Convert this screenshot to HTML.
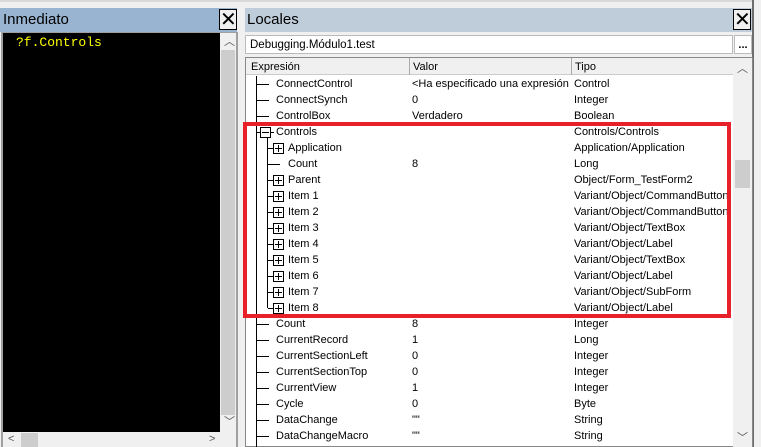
<!DOCTYPE html>
<html><head><meta charset="utf-8"><style>
*{margin:0;padding:0;box-sizing:border-box}
body{width:761px;height:447px;overflow:hidden;background:#f0f0f0;font-family:"Liberation Sans",Arial,sans-serif;font-size:11px;color:#000;position:relative}
.a{position:absolute}
.t{white-space:nowrap;line-height:16px}
.close{border:1px solid #000;background:#f0f0f0;font-size:20px;line-height:18px;text-align:center;font-family:"DejaVu Sans",sans-serif}
.hl{position:absolute;height:1px;background:#000}
.vl{position:absolute;width:1px;background:#000}
.box{position:absolute;width:11px;height:11px;border:1px solid #000;background:#fff}
.box:before{content:"";position:absolute;left:1px;top:4px;width:7px;height:1px;background:#000}
.plus:after{content:"";position:absolute;left:4px;top:1px;width:1px;height:7px;background:#000}
</style></head><body>
<div class="a" style="left:0;top:0;width:761px;height:2px;background:#d8d8d8"></div>
<div class="a" style="left:0;top:8px;width:237px;height:24px;background:#99b4d1"></div>
<div class="a t" style="left:3px;top:9px;font-size:15px;line-height:21px;color:#000">Inmediato</div>
<div class="a close" style="left:219px;top:9px;width:18px;height:21px">✕</div>
<div class="a" style="left:1px;top:32px;width:237px;height:415px;background:#a0a0a0"></div>
<div class="a" style="left:3px;top:33px;width:217px;height:399px;background:#000"></div>
<div class="a t" style="left:16px;top:35px;color:#ffff00;font-family:'Liberation Mono',monospace;font-size:13px">?f.Controls</div>
<div class="a" style="left:220px;top:33px;width:16px;height:399px;background:#f0f0f0"></div>
<div class="a" style="left:221px;top:50px;width:14px;height:365px;background:#cdcdcd"></div>
<div class="a t" style="left:224px;top:34px;font-size:11px;color:#555">︿</div>
<div class="a t" style="left:224px;top:414px;font-size:11px;color:#555">﹀</div>
<div class="a" style="left:3px;top:432px;width:233px;height:15px;background:#f0f0f0"></div>
<div class="a" style="left:21px;top:433px;width:17px;height:14px;background:#cdcdcd"></div>
<div class="a t" style="left:8px;top:431px;color:#555">&lt;</div>
<div class="a t" style="left:209px;top:431px;color:#555">&gt;</div>
<div class="a" style="left:245px;top:8px;width:507px;height:24px;background:#bfcddb"></div>
<div class="a t" style="left:247px;top:9px;font-size:15px;line-height:21px">Locales</div>
<div class="a close" style="left:733px;top:9px;width:18px;height:21px">✕</div>
<div class="a" style="left:752px;top:0;width:9px;height:447px;background:#f0f0f0;border-left:2px solid #6d6d6d"></div>
<div class="a" style="left:245px;top:35px;width:488px;height:19px;background:#fff;border:1px solid #bbb"></div>
<div class="a t" style="left:250px;top:37px;font-size:11.5px">Debugging.Módulo1.test</div>
<div class="a" style="left:734px;top:35px;width:18px;height:19px;background:#fff;border:1px solid #bbb;font-weight:bold;text-align:center;line-height:18px">...</div>
<div class="a" style="left:245px;top:57px;width:508px;height:390px;background:#fff;border:1px solid #888"></div>
<div class="a" style="left:246px;top:58px;width:487px;height:17px;background:#f0f0f0;border-bottom:1px solid #ccc"></div>
<div class="a" style="left:409px;top:58px;width:1px;height:17px;background:#aaa"></div>
<div class="a" style="left:571px;top:58px;width:1px;height:17px;background:#aaa"></div>
<div class="a t" style="left:251px;top:59px">Expresión</div>
<div class="a t" style="left:413px;top:59px">Valor</div>
<div class="a t" style="left:575px;top:59px">Tipo</div>
<div class="a" style="left:733px;top:58px;width:19px;height:389px;background:#f0f0f0"></div>
<div class="a" style="left:735px;top:160px;width:15px;height:28px;background:#cdcdcd"></div>
<div class="a t" style="left:737px;top:61px;font-size:11px;color:#555">︿</div>
<div class="a t" style="left:737px;top:430px;font-size:11px;color:#555">﹀</div>
<div class="vl" style="left:256px;top:76px;height:371px"></div>
<div class="vl" style="left:267px;top:138px;height:170px"></div>
<div id="rows"></div>
<script>
var R=[
[1,"ConnectControl","<Ha especificado una expresión","Control"],
[1,"ConnectSynch","0","Integer"],
[1,"ControlBox","Verdadero","Boolean"],
[1,"Controls","","Controls/Controls","m"],
[2,"Application","","Application/Application","p"],
[2,"Count","8","Long"],
[2,"Parent","","Object/Form_TestForm2","p"],
[2,"Item 1","","Variant/Object/CommandButton","p"],
[2,"Item 2","","Variant/Object/CommandButton","p"],
[2,"Item 3","","Variant/Object/TextBox","p"],
[2,"Item 4","","Variant/Object/Label","p"],
[2,"Item 5","","Variant/Object/TextBox","p"],
[2,"Item 6","","Variant/Object/Label","p"],
[2,"Item 7","","Variant/Object/SubForm","p"],
[2,"Item 8","","Variant/Object/Label","p"],
[1,"Count","8","Integer"],
[1,"CurrentRecord","1","Long"],
[1,"CurrentSectionLeft","0","Integer"],
[1,"CurrentSectionTop","0","Integer"],
[1,"CurrentView","1","Integer"],
[1,"Cycle","0","Byte"],
[1,"DataChange","\"\"","String"],
[1,"DataChangeMacro","\"\"","String"]];
var h="";
R.forEach(function(r,i){var y=76+16*i,c=y+8;
var e=function(s){return s.replace(/</g,"&lt;")};
if(r[0]==1){
 if(r[4]){h+='<div class="hl" style="left:257px;top:'+c+'px;width:3px"></div><div class="box" style="left:260px;top:'+(c-5)+'px"></div><div class="hl" style="left:271px;top:'+c+'px;width:3px"></div>';}
 else h+='<div class="hl" style="left:257px;top:'+c+'px;width:12px"></div>';
 h+='<div class="a t" style="left:276px;top:'+y+'px">'+r[1]+'</div>';
}else{
 if(r[4])h+='<div class="hl" style="left:268px;top:'+c+'px;width:5px"></div><div class="box plus" style="left:273px;top:'+(c-5)+'px"></div>';
 else h+='<div class="hl" style="left:268px;top:'+c+'px;width:12px"></div>';
 h+='<div class="a t" style="left:288px;top:'+y+'px">'+r[1]+'</div>';
}
h+='<div class="a t" style="left:412px;top:'+y+'px;width:158px;overflow:hidden">'+e(r[2])+'</div>';
h+='<div class="a t" style="left:574px;top:'+y+'px;width:158px;overflow:hidden">'+r[3]+'</div>';
});
document.getElementById("rows").innerHTML=h;
</script>
<div class="a" style="left:243px;top:122px;width:488px;height:196px;border:4px solid #e8202a"></div>
</body></html>
